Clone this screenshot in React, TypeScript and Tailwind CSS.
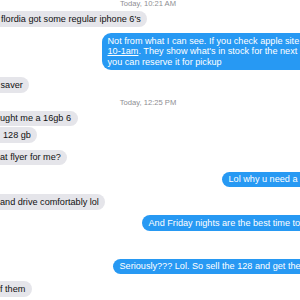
import React from "react";

function Stamp({ children, className = "" }: { children: React.ReactNode; className?: string }) {
  return (
    <div className={`h-[8px] leading-[8px] text-[7.6px] text-[#8e8e93] text-center ${className}`}>
      <span className="inline-block -translate-x-[2px]">{children}</span>
    </div>
  );
}

function Gray({ children, pl, className = "" }: { children: React.ReactNode; pl: string; className?: string }) {
  return (
    <div className={`self-start -ml-[20px] ${className}`}>
      <div className={`bg-[#e5e5ea] text-[#111] rounded-[8px] ${pl} pr-[6.5px] py-[2.5px] leading-[10.5px] whitespace-nowrap`}>
        {children}
      </div>
    </div>
  );
}

function Blue({ children, left, className = "" }: { children: React.ReactNode; left: string; className?: string }) {
  return (
    <div className={`flex ${left} ${className}`}>
      <div className="bg-[#2799f3] text-white rounded-[8px] pl-[7px] pr-[60px] py-[2.5px] leading-[10.5px] whitespace-nowrap">
        {children}
      </div>
    </div>
  );
}

export default function App() {
  return (
    <div className="w-[300px] h-[300px] overflow-hidden bg-white font-['Liberation_Sans',Arial,sans-serif] text-[9.15px]">
      <div className="flex flex-col">
        <Stamp>Today, 10:21 AM</Stamp>
        <Gray pl="pl-[21px]" className="mt-[3px]">flordia got some regular iphone 6's</Gray>
        <div className="flex pl-[101.5px] mt-[6.5px]">
          <div className="bg-[#2799f3] text-white rounded-[9px] pl-[6px] pr-[40px] py-[2.5px] leading-[10.5px] whitespace-nowrap">
            Not from what I can see. If you check apple site
            <br />
            <span className="underline">10-1am</span>. They show what's in stock for the next
            <br />
            you can reserve it for pickup
          </div>
        </div>
        <Gray pl="pl-[20.5px]" className="mt-[7.5px]">saver</Gray>
        <Stamp className="mt-[6.5px]">Today, 12:25 PM</Stamp>
        <Gray pl="pl-[20px]" className="mt-[3.5px]">ught me a 16gb 6</Gray>
        <Gray pl="pl-[23px]" className="mt-[1px]">128 gb</Gray>
        <Gray pl="pl-[20px]" className="mt-[7px]">at flyer for me?</Gray>
        <Blue left="pl-[221.5px]" className="mt-[6.5px]">Lol why u need a</Blue>
        <Gray pl="pl-[20px]" className="mt-[7px]">and drive comfortably lol</Gray>
        <Blue left="pl-[141.5px]" className="mt-[5.5px]">And Friday nights are the best time to</Blue>
        <Blue left="pl-[112.5px]" className="mt-[28px]">Seriously??? Lol. So sell the 128 and get the</Blue>
        <Gray pl="pl-[20px]" className="mt-[7px]">f them</Gray>
      </div>
    </div>
  );
}
